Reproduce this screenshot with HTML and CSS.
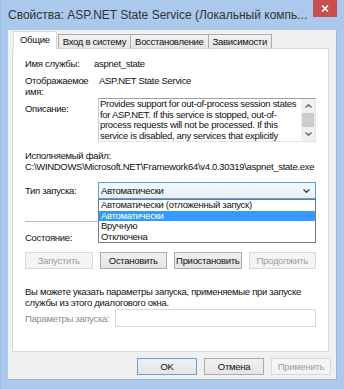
FILE: index.html
```html
<!DOCTYPE html>
<html lang="ru">
<head>
<meta charset="utf-8">
<link rel="stylesheet" href="styles.css">
</head>
<body>
<div class="window">
  <div class="titlebar">
    <div class="title">Свойства: ASP.NET State Service (Локальный компь...</div>
    <div class="close">
      <svg width="8" height="7" viewBox="0 0 8 7"><path d="M1 0.5 L7 6.5 M7 0.5 L1 6.5" stroke="#fff" stroke-width="1.6" fill="none"/></svg>
    </div>
  </div>
  <div class="client ui">
    <div class="tabs">
      <div class="tab active">Общие</div>
      <div class="tab">Вход в систему</div>
      <div class="tab">Восстановление</div>
      <div class="tab">Зависимости</div>
    </div>
    <div class="panel">
      <div class="row r1"><span class="lbl">Имя службы:</span><span class="val v1">aspnet_state</span></div>
      <div class="row r2"><span class="lbl">Отображаемое<br>имя:</span><span class="val v2">ASP.NET State Service</span></div>
      <div class="row r3">
        <span class="lbl lbl-desc">Описание:</span>
        <div class="desc">
          <div class="desc-text">Provides support for out-of-process session states<br>for ASP.NET. If this service is stopped, out-of-<br>process requests will not be processed. If this<br>service is disabled, any services that explicitly</div>
          <div class="sb">
            <div class="sb-btn"><svg width="7" height="4" viewBox="0 0 7 4"><path d="M0.5 3.5 L3.5 0.7 L6.5 3.5" stroke="#606060" stroke-width="1.2" fill="none"/></svg></div>
            <div class="sb-thumb"></div>
            <div class="sb-btn"><svg width="7" height="4" viewBox="0 0 7 4"><path d="M0.5 0.5 L3.5 3.3 L6.5 0.5" stroke="#606060" stroke-width="1.2" fill="none"/></svg></div>
          </div>
        </div>
      </div>
      <div class="exe-label">Исполняемый файл:</div>
      <div class="exe-path">C:\WINDOWS\Microsoft.NET\Framework64\v4.0.30319\aspnet_state.exe</div>
      <div class="row r5">
        <span class="lbl">Тип запуска:</span>
        <div class="combo">
          <span class="combo-text">Автоматически</span>
          <svg class="chev" width="7" height="4" viewBox="0 0 7 4"><path d="M0.5 0.5 L3.5 3.3 L6.5 0.5" stroke="#404040" stroke-width="1.3" fill="none"/></svg>
          <div class="list">
            <div class="item">Автоматически (отложенный запуск)</div>
            <div class="item sel">Автоматически</div>
            <div class="item">Вручную</div>
            <div class="item">Отключена</div>
          </div>
        </div>
      </div>
      <div class="sep"></div>
      <div class="row r6"><span class="lbl">Состояние:</span></div>
      <div class="svc-buttons">
        <div class="btn disabled">Запустить</div>
        <div class="btn">Остановить</div>
        <div class="btn">Приостановить</div>
        <div class="btn disabled">Продолжить</div>
      </div>
      <p class="hint">Вы можете указать параметры запуска, применяемые при запуске<br>службы из этого диалогового окна.</p>
      <div class="params">
        <span class="lbl dim">Параметры запуска:</span>
        <div class="input"></div>
      </div>
    </div>
    <div class="dlg-buttons">
      <div class="btn dlg default">OK</div>
      <div class="btn dlg">Отмена</div>
      <div class="btn dlg disabled">Применить</div>
    </div>
  </div>
</div>
</body>
</html>
```
FILE: styles.css
```css
html, body { margin: 0; padding: 0; }
body { width: 344px; height: 389px; overflow: hidden; background: #aac9ec; }

.window {
  width: 344px;
  height: 389px;
  background: #aac9ec;
  display: flex;
  flex-direction: column;
  box-sizing: border-box;
  border-left: 1px solid #9bbde4;
}

.titlebar {
  height: 30px;
  display: flex;
  align-items: flex-start;
  flex: none;
}
.title {
  flex: 1;
  padding: 7px 0 0 7px;
  font-family: "Liberation Sans", Arial, sans-serif;
  font-size: 12px;
  line-height: 16px;
  color: #333;
  white-space: nowrap;
  overflow: hidden;
}
.close {
  width: 24px;
  height: 17px;
  margin: 0 7px 0 0;
  background: #c7504f;
  display: flex;
  align-items: center;
  justify-content: center;
  flex: none;
}

.ui {
  font-family: "Liberation Sans", Arial, sans-serif;
  font-size: 9.5px;
  letter-spacing: -0.3px;
  line-height: 11px;
  color: #111;
}

.client {
  margin: 0 7px 0 7px;
  height: 350px;
  background: #f0f0f0;
  padding: 1px 0 0 4px;
  box-sizing: border-box;
  display: flex;
  flex-direction: column;
  border: 1px solid #9fb6cf;
  border-width: 0 1px 1px 0;
}

.tabs {
  display: flex;
  align-items: flex-end;
  height: 18px;
  margin-bottom: -1px;
  padding-left: 1px;
  position: relative;
  z-index: 1;
}
.tab {
  height: 15px;
  box-sizing: border-box;
  padding: 0 4px;
  border: 1px solid #acacac;
  border-bottom-color: #d9d9d9;
  background: linear-gradient(#f2f2f2, #e5e5e5);
  margin-left: -1px;
  line-height: 13px;
  white-space: nowrap;
}
.tab.active {
  height: 18px;
  margin-left: 0;
  margin-right: 1px;
  background: #fff;
  border-color: #d9d9d9;
  border-bottom: none;
  padding: 0 6px;
  line-height: 15px;
}
.tab:nth-child(2) { margin-left: 0; }

.panel {
  width: 317px;
  height: 304px;
  box-sizing: border-box;
  background: #fff;
  border: 1px solid #d9d9d9;
  padding: 0 12px;
  flex: none;
}

.row {
  display: grid;
  grid-template-columns: 73px 1fr;
}
.r1 { margin-top: 9px; }
.r2 { margin-top: 6px; }
.r3 { margin-top: 1px; }
.r5 { margin-top: 10px; align-items: center; }
.r6 { margin-top: 10px; }
.v1 { margin-left: -4px; }
.v2 { margin-left: 1px; }
.lbl-desc { padding-top: 5px; }

.desc {
  height: 44px;
  box-sizing: border-box;
  border: 1px solid #e3e3e3;
  border-top-color: #a0a0a0;
  border-left-color: #c8c8c8;
  display: flex;
  overflow: hidden;
}
.desc-text {
  flex: 1;
  padding: 0 0 0 1px;
  line-height: 10.5px;
  white-space: nowrap;
  overflow: hidden;
}
.sb {
  width: 14px;
  background: #f0f0f0;
  display: flex;
  flex-direction: column;
}
.sb-btn {
  height: 14px;
  display: flex;
  align-items: center;
  justify-content: center;
}
.sb-thumb {
  height: 14px;
  margin: 0 1px;
  background: #cdcdcd;
}

.exe-label { margin-top: 8px; }
.exe-path { white-space: nowrap; }

.combo {
  position: relative;
  height: 17px;
  box-sizing: border-box;
  border: 1px solid #569de5;
  background: linear-gradient(#f3f8fd, #e6f0fa);
  display: flex;
  align-items: center;
  padding-left: 2px;
}
.combo-text { flex: 1; }
.chev { margin-right: 5px; }
.list {
  position: absolute;
  left: -1px;
  right: -1px;
  top: 16px;
  background: #fff;
  border: 1px solid #6e7b8a;
  z-index: 2;
}
.item {
  height: 10.5px;
  line-height: 10.5px;
  padding-left: 2px;
  white-space: nowrap;
}
.item.sel { background: #3399ff; color: #fff; }

.sep {
  margin-top: 22px;
  height: 1px;
  background: #bcbcbc;
}

.svc-buttons {
  margin-top: 9px;
  display: flex;
  gap: 7px;
}
.btn {
  height: 17px;
  box-sizing: border-box;
  border: 1px solid #acacac;
  background: linear-gradient(#f0f0f0, #e5e5e5);
  display: flex;
  align-items: center;
  justify-content: center;
  white-space: nowrap;
}
.svc-buttons .btn { flex: 1; }
.btn.disabled {
  border-color: #d9d9d9;
  background: #f4f4f4;
  color: #a0a0a0;
}
.btn.default { border-color: #5ea3e6; }

.hint { margin: 17px 0 0 0; }

.params {
  margin-top: 1px;
  display: grid;
  grid-template-columns: 90px 1fr;
  align-items: center;
}
.dim { color: #8d8d8d; }
.input {
  height: 18px;
  box-sizing: border-box;
  border: 1px solid #dadada;
  background: #fff;
}

.dlg-buttons {
  margin-top: 6px;
  display: flex;
  justify-content: flex-end;
  gap: 7px;
  padding-right: 5px;
}
.btn.dlg { width: 60px; }
```
